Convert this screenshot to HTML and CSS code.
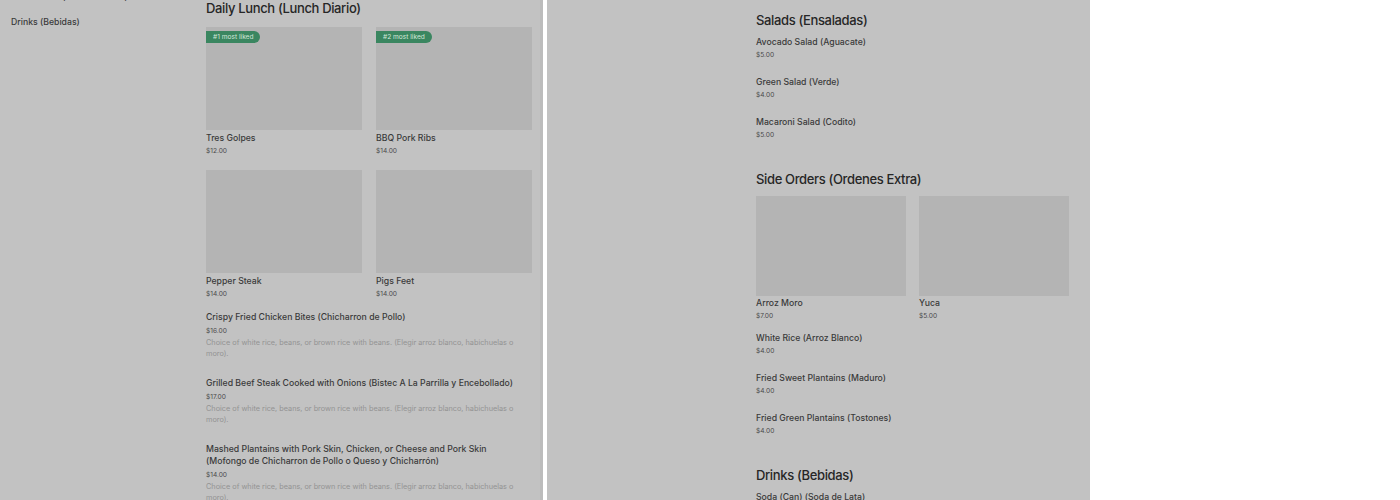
FILE: index.html
```html
<!DOCTYPE html>
<html lang="en">
<head>
<meta charset="utf-8">
<title>Menu</title>
<link rel="stylesheet" href="styles.css">
</head>
<body>
<div class="screen">
  <section class="pane pane-left">
    <nav class="side-nav">
      <a class="nav-link">Side Orders (Ordenes Extra)</a>
      <a class="nav-link">Drinks (Bebidas)</a>
    </nav>
    <main class="menu menu-left">
      <h2 class="section-title">Daily Lunch (Lunch Diario)</h2>
      <div class="card-grid card-grid-left">
        <div class="card">
          <div class="thumb"><span class="badge">#1 most liked</span></div>
          <div class="item-name">Tres Golpes</div>
          <div class="item-price">$12.00</div>
        </div>
        <div class="card">
          <div class="thumb"><span class="badge">#2 most liked</span></div>
          <div class="item-name">BBQ Pork Ribs</div>
          <div class="item-price">$14.00</div>
        </div>
        <div class="card">
          <div class="thumb"></div>
          <div class="item-name">Pepper Steak</div>
          <div class="item-price">$14.00</div>
        </div>
        <div class="card">
          <div class="thumb"></div>
          <div class="item-name">Pigs Feet</div>
          <div class="item-price">$14.00</div>
        </div>
      </div>
      <div class="list list-left">
        <div class="list-item">
          <div class="item-name">Crispy Fried Chicken Bites (Chicharron de Pollo)</div>
          <div class="item-price">$16.00</div>
          <div class="item-desc">Choice of white rice, beans, or brown rice with beans. (Elegir arroz blanco, habichuelas o moro).</div>
        </div>
        <div class="list-item">
          <div class="item-name">Grilled Beef Steak Cooked with Onions (Bistec A La Parrilla y Encebollado)</div>
          <div class="item-price">$17.00</div>
          <div class="item-desc">Choice of white rice, beans, or brown rice with beans. (Elegir arroz blanco, habichuelas o moro).</div>
        </div>
        <div class="list-item">
          <div class="item-name">Mashed Plantains with Pork Skin, Chicken, or Cheese and Pork Skin (Mofongo de Chicharron de Pollo o Queso y Chicharrón)</div>
          <div class="item-price">$14.00</div>
          <div class="item-desc">Choice of white rice, beans, or brown rice with beans. (Elegir arroz blanco, habichuelas o moro).</div>
        </div>
      </div>
    </main>
  </section>
  <div class="divider"></div>
  <section class="pane pane-right">
    <main class="menu menu-right">
      <h2 class="section-title">Salads (Ensaladas)</h2>
      <div class="list list-right">
        <div class="list-item"><div class="item-name">Avocado Salad (Aguacate)</div><div class="item-price">$5.00</div></div>
        <div class="list-item"><div class="item-name">Green Salad (Verde)</div><div class="item-price">$4.00</div></div>
        <div class="list-item"><div class="item-name">Macaroni Salad (Codito)</div><div class="item-price">$5.00</div></div>
      </div>
      <h2 class="section-title section-gap">Side Orders (Ordenes Extra)</h2>
      <div class="card-grid card-grid-right">
        <div class="card">
          <div class="thumb"></div>
          <div class="item-name">Arroz Moro</div>
          <div class="item-price">$7.00</div>
        </div>
        <div class="card">
          <div class="thumb"></div>
          <div class="item-name">Yuca</div>
          <div class="item-price">$5.00</div>
        </div>
      </div>
      <div class="list list-right list-after-cards">
        <div class="list-item"><div class="item-name">White Rice (Arroz Blanco)</div><div class="item-price">$4.00</div></div>
        <div class="list-item"><div class="item-name">Fried Sweet Plantains (Maduro)</div><div class="item-price">$4.00</div></div>
        <div class="list-item"><div class="item-name">Fried Green Plantains (Tostones)</div><div class="item-price">$4.00</div></div>
      </div>
      <h2 class="section-title section-gap-lg">Drinks (Bebidas)</h2>
      <div class="list list-right">
        <div class="list-item"><div class="item-name">Soda (Can) (Soda de Lata)</div><div class="item-price">$2.00</div></div>
      </div>
    </main>
  </section>
</div>
</body>
</html>
```

FILE: styles.css
```css
* { box-sizing: border-box; margin: 0; padding: 0; }
html, body { width: 1400px; height: 500px; overflow: hidden; background: #ffffff; }
body { font-family: Inter, "Noto Sans", "Liberation Sans", sans-serif; color: #333; }

.screen { display: flex; height: 500px; }

.pane { background: #c2c2c2; height: 500px; overflow: hidden; display: flex; }
.pane-left { width: 543px; border-right: 3px solid #bcbcbc; }
.divider { width: 4px; background: #ffffff; }
.pane-right { width: 543px; }

.side-nav { width: 206px; padding-left: 11px; margin-top: -9px; display: flex; flex-direction: column; gap: 13px; }
.nav-link { font-size: 8.7px; line-height: 12px; color: #3a3a3a; font-weight: 500; }

.menu-left { width: 326px; }
.menu-right { width: 313px; margin-left: 209px; padding-top: 12px; }

.section-title { font-size: 13px; line-height: 16px; font-weight: 500; color: #262626; letter-spacing: -0.35px; }

.card-grid { display: grid; grid-template-columns: 1fr 1fr; }
.card-grid-left { column-gap: 14px; row-gap: 12px; margin-top: 11px; }
.card-grid-right { column-gap: 13px; margin-top: 9px; }

.card { display: flex; flex-direction: column; }
.thumb { position: relative; background: #b4b4b4; height: 103px; margin-bottom: 2px; }
.card-grid-right .thumb { height: 100px; margin-bottom: 1px; }

.badge { position: absolute; left: 0; top: 4px; height: 12px; padding: 0 7px 0 7px; border-radius: 0 6px 6px 0; background: #3a8660; color: #d2e6d9; font-size: 6.6px; line-height: 12px; }

.item-name { font-size: 8.7px; line-height: 12px; font-weight: 500; color: #3a3a3a; }
.item-price { font-size: 6.6px; line-height: 13px; color: #4a4a4a; margin-top: 1px; }
.item-desc { font-size: 7.3px; line-height: 11px; color: #939393; }

.list-left { width: 312px; margin-top: 10px; display: flex; flex-direction: column; gap: 18px; }
.list-left .item-price { line-height: 12px; margin-top: 2px; }

.list-right { display: flex; flex-direction: column; gap: 14px; margin-top: 8px; }
.list-after-cards { margin-top: 9px; }

.section-gap { margin-top: 29px; }
.section-gap-lg { margin-top: 29px; }
```
